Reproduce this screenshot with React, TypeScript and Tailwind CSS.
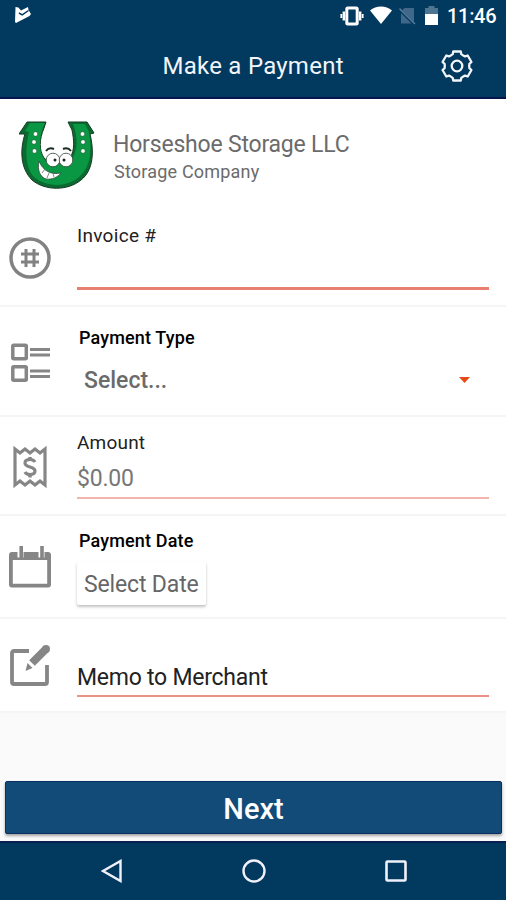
import React from "react";

type RowProps = { className: string; icon: React.ReactNode; children: React.ReactNode };

function Row({ className, icon, children }: RowProps) {
  return (
    <section className={`flex border-b-2 border-[#f5f5f5] bg-white pr-[17px] ${className}`}>
      <div className="w-[77px] shrink-0">{icon}</div>
      <div className="flex min-w-0 flex-1 flex-col items-start">{children}</div>
    </section>
  );
}

function StatusBar() {
  return (
    <div className="flex h-8 items-center justify-between pl-[14px] pr-[9px]">
      <svg width="18" height="18" viewBox="0 0 18 18" className="mt-[-2px]">
        <path d="M1.500 1 4.400 1.600 7 4.500 9 3.400 14 1 14.500 4 17 8 15.500 10 2 17 1 16Z" fill="#fff" />
        <path d="m5 7 3.200 1.800 6.300-4.300" fill="none" stroke="#02395f" strokeWidth="1.500" />
      </svg>
      <div className="flex items-center">
        <svg width="24" height="22" viewBox="0 0 24 22" fill="none" stroke="#fff">
          <rect x="6.800" y="3" width="10.400" height="16" rx="1" strokeWidth="3" />
          <path d="M3.800 6.500v9M20.200 6.500v9" strokeWidth="2.400" />
          <path d="M1.300 9v4M22.700 9v4" strokeWidth="1.800" />
        </svg>
        <svg width="22" height="18" viewBox="0 0 22 18" className="ml-[6px] mt-[-2px]">
          <path d="M0 4.500C6-.7 16-.7 22 4.500L11 18Z" fill="#fff" />
        </svg>
        <svg width="17" height="18" viewBox="0 0 17 18" className="ml-[7px] mt-[-1px]">
          <path d="M2 4.200 5.500 1H15v15.500H2Z" fill="#41688a" />
          <path d="M0 2 16 18" stroke="#02395f" strokeWidth="3" />
          <path d="M.5 1.500 16 17" stroke="#55799a" strokeWidth="1.600" />
        </svg>
        <svg width="13" height="19" viewBox="0 0 13 19" className="ml-[9px] mt-[-1px]">
          <path d="M3.500 0h6v2H13v6H0V2h3.500z" fill="#4d7592" />
          <path d="M0 8h13v11H0z" fill="#fff" />
        </svg>
        <span className="ml-[9px] w-[50px] whitespace-nowrap text-[20px] font-medium leading-8 tracking-[-0.3px] text-white">11:46</span>
      </div>
    </div>
  );
}

// Six flat teeth separated by shallow notches, as [angle offset, radius] per tooth.
const toothProfile: [number, number][] = [[-30, 12.2], [-20, 12.6], [-14.5, 15], [14.5, 15], [20, 12.6]];
const gearPoints = [0, 60, 120, 180, 240, 300]
  .flatMap((base) =>
    toothProfile.map(([offset, radius]) => {
      const angle = ((base + offset - 90) * Math.PI) / 180;
      return `${(16 + radius * Math.cos(angle)).toFixed(2)},${(16 + radius * Math.sin(angle)).toFixed(2)}`;
    }),
  )
  .join(" ");

function Gear() {
  return (
    <svg width="32" height="32" viewBox="0 0 32 32" fill="none" stroke="#f2f5fa" strokeWidth="2.300" strokeLinejoin="round">
      <polygon points={gearPoints} />
      <circle cx="16" cy="16" r="5.300" />
    </svg>
  );
}

function HorseshoeLogo() {
  return (
    <svg width="76" height="70" viewBox="0 0 76 70" className="shrink-0">
      <path d="M8 2H27L25 8C20 20 20 30 25 38C30 44 47 44 51 38C56 30 55 20 53 10L49 2H68L75 13L71 14C75 30 75 50 62 60C49 71 26 71 13 60C1 48 1 29 6 14L0 14Z" fill="#0b6a30" stroke="#123c22" strokeWidth="1" />
      <path d="M11 3H26C20 15 19 30 25 39C30 46 47 46 53 39C59 30 59 17 54 4H66L70 12C73 30 72 47 60 57C47 68 27 67 15 57C6 47 6 29 10 12L6 11Z" fill="#099743" />
      <g fill="#fff" stroke="#17582d" strokeWidth=".6">
        <circle cx="16.500" cy="14" r="2.300" /><circle cx="15" cy="22" r="2.300" /><circle cx="15.500" cy="31" r="2.300" />
        <circle cx="63.500" cy="14" r="2.300" /><circle cx="64" cy="22" r="2.300" /><circle cx="64" cy="31" r="2.300" />
      </g>
      <g fill="#fff" stroke="#33453a" strokeWidth=".8">
        <path d="M20 41C18 50 21 57 27 59C33 60 39 57 42 53C32 55 24 51 20 41Z" />
        <circle cx="34" cy="40" r="6.800" /><circle cx="47" cy="40" r="6.800" />
      </g>
      <path d="m23 53 3-4m2 9 2-5m5 4-1-4" stroke="#56735f" strokeWidth=".8" />
      <circle cx="36" cy="40" r="1.500" fill="#222" /><circle cx="45" cy="40" r="1.500" fill="#222" />
      <path d="M27 31q3-4 8-2M44 29q5-2 8 2" fill="none" stroke="#1b2b20" strokeWidth="2" />
    </svg>
  );
}

export default function App() {
  return (
    <main className="flex h-[900px] w-[506px] flex-col overflow-hidden bg-[#fafafa] font-['Roboto',sans-serif]">
      <header className="h-[99px] shrink-0 border-b-2 border-[#07154f] bg-[#02395f]">
        <StatusBar />
        <div className="grid h-[67px] grid-cols-[1fr_181px_1fr] items-center">
          <span />
          <h1 className="whitespace-nowrap text-[24px] leading-8 tracking-[0.25px] text-[#f2f5fa]">Make a Payment</h1>
          <div className="flex justify-end pr-[33px]"><Gear /></div>
        </div>
      </header>

      <section className="flex h-[117px] shrink-0 bg-white pl-[19px] pt-[21px] text-[#6b6b6b]">
        <HorseshoeLogo />
        <div className="ml-[18px] mt-[9px]">
          <h2 className="whitespace-nowrap text-[23px] leading-8 tracking-[-0.2px]">Horseshoe Storage LLC</h2>
          <p className="ml-px mt-[-1px] whitespace-nowrap text-[18px] leading-6 tracking-[0.2px]">Storage Company</p>
        </div>
      </section>

      <Row className="h-[91px] shrink-0" icon={
        <svg width="42" height="42" viewBox="0 0 42 42" fill="none" stroke="#828282" className="ml-[9px] mt-[21px]">
          <circle cx="21" cy="21" r="19" strokeWidth="3.500" />
          <path d="M17 12v18M25 12v18M12 17h18M12 25h18" strokeWidth="3" />
        </svg>
      }>
        <label className="mt-[8px] whitespace-nowrap text-[19px] leading-6 tracking-[0.3px] text-[#222]">Invoice #</label>
        <div className="mt-[39px] h-[3px] w-full bg-[#e97f70]" />
      </Row>

      <Row className="h-[110px] shrink-0" icon={
        <svg width="40" height="40" viewBox="0 0 40 40" fill="none" stroke="#868686" strokeWidth="3.500" className="ml-[11px] mt-[36px]">
          <rect x="1.800" y="2.300" width="13.500" height="13.500" rx="1" />
          <rect x="1.800" y="23.800" width="13.500" height="13.500" rx="1" />
          <path d="M19 6.500h20M19 12h20M19 28h20M19 33.500h20" strokeWidth="3" />
        </svg>
      }>
        <label className="ml-[2px] mt-[19px] whitespace-nowrap text-[18px] font-medium leading-6 tracking-[0.15px] text-black">Payment Type</label>
        <div className="mt-[15px] flex w-full items-center justify-between pl-[7px] pr-[19px]">
          <span className="whitespace-nowrap text-[23px] font-medium leading-8 text-[#6b6b6b]">Select...</span>
          <svg width="11" height="6" viewBox="0 0 11 6" className="mt-[-2px]"><path d="M0 0h11L5.500 6Z" fill="#e64a19" /></svg>
        </div>
      </Row>

      <Row className="h-[99px] shrink-0" icon={
        <svg width="34" height="44" viewBox="0 0 34 44" fill="none" stroke="#868686" className="ml-[13px] mt-[28px]">
          <path d="M2 4v36l5-4 5 4 5-4 5 4 5-4 5 4V4l-5 4-5-4-5 4-5-4-5 4Z" strokeWidth="3.200" />
          <path d="M22 17c-1-2-3-2.500-5-2.500-3 0-5 1-5 3.500 0 5 10 3 10 8 0 2.500-2 3.500-5 3.500-2 0-4-.5-5-2.500" strokeWidth="3.200" />
          <path d="M17 12v3.500M17 29v3.500" strokeWidth="3.500" />
        </svg>
      }>
        <label className="mt-[14px] whitespace-nowrap text-[19px] leading-6 tracking-[0.2px] text-[#222]">Amount</label>
        <span className="mt-[8px] whitespace-nowrap text-[23px] leading-8 tracking-[-0.2px] text-[#777]">$0.00</span>
        <div className="mt-[2px] h-[2px] w-full bg-[#f3b5ad]" />
      </Row>

      <Row className="h-[103px] shrink-0" icon={
        <svg width="42" height="42" viewBox="0 0 42 42" className="ml-[9px] mt-[30px]">
          <path d="M3 6H39q3 0 3 3V38.500q0 3-3 3H3q-3 0-3-3V9q0-3 3-3ZM3.800 14v23.700h34.400V14Z" fill="#868686" fillRule="evenodd" />
          <path d="M11.500 4v7.500M32.500 4v7.500" stroke="#fff" strokeWidth="6" />
          <path d="M12.200 0v14M33 0v14" stroke="#868686" strokeWidth="3.600" />
        </svg>
      }>
        <label className="ml-[2px] mt-[13px] whitespace-nowrap text-[18px] font-medium leading-6 tracking-[0.15px] text-black">Payment Date</label>
        <button className="mt-[9px] h-[43px] w-[129px] whitespace-nowrap rounded-[2px] bg-white pl-[7px] pt-px text-left text-[23px] leading-[43px] tracking-[-0.15px] text-[#666] shadow-[0_2px_3px_rgba(0,0,0,0.24)]">Select Date</button>
      </Row>

      <Row className="h-[94px] shrink-0" icon={
        <svg width="42" height="44" viewBox="0 0 42 44" fill="none" stroke="#868686" className="ml-[9px] mt-[25px]">
          <path d="M20 7H5q-2 0-2 2v29q0 2 2 2h31q2 0 2-2V21" strokeWidth="3.800" />
          <path d="M23 19 37 5" strokeWidth="8" />
          <circle cx="37" cy="5" r="4" fill="#868686" stroke="none" />
          <path d="m18.500 19 5 5-7 3Z" fill="#868686" stroke="none" />
        </svg>
      }>
        <span className="mt-[43px] whitespace-nowrap text-[23px] leading-8 tracking-[-0.25px] text-[#222]">Memo to Merchant</span>
        <div className="mt-px h-[2px] w-full bg-[#eb9287]" />
      </Row>

      <div className="flex-1 pl-[5px] pr-[4px] pt-[68px]">
        <button className="h-[53px] w-full rounded-[2px] border border-[#0a2f63] bg-[#124a78] pt-[3px] text-[29px] font-medium leading-8 text-white shadow-[0_2px_3px_rgba(0,0,0,0.35)]">Next</button>
      </div>

      <nav className="flex h-[59px] shrink-0 items-center border-t-2 border-[#07204f] bg-[#02395f]">
        <svg width="22" height="24" viewBox="0 0 22 24" fill="none" stroke="#f0f1fa" strokeWidth="2.400" className="ml-[101px] mt-[-2px]">
          <path d="M19.500 2v20L2 12Z" />
        </svg>
        <svg width="24" height="24" viewBox="0 0 24 24" fill="none" stroke="#f0f1fa" strokeWidth="2.400" className="ml-[119px] mt-[-2px]">
          <circle cx="12" cy="12" r="10.500" />
        </svg>
        <svg width="22" height="22" viewBox="0 0 22 22" fill="none" stroke="#f0f1fa" strokeWidth="2.600" className="ml-[119px] mt-[-2px]">
          <rect x="1.500" y="1.500" width="19" height="19" rx="1" />
        </svg>
      </nav>
    </main>
  );
}
